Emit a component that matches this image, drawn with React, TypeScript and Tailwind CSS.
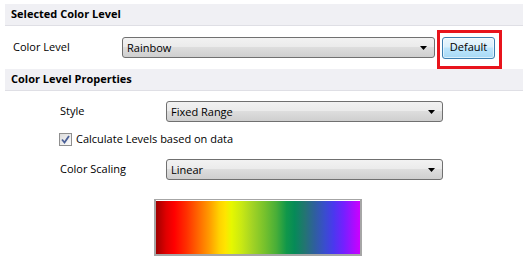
import React from "react";

function Select({ value, className }: { value: string; className: string }) {
  return (
    <div
      className={`relative flex h-[21px] items-center rounded-[3px] border border-[#707070] bg-[linear-gradient(to_bottom,#f2f2f2_0%,#ebebeb_45%,#dddddd_50%,#cfcfcf_100%)] pl-[4px] text-[11px] text-black ${className}`}
    >
      <span className="leading-none">{value}</span>
      <svg className="absolute right-[6px] top-[8px]" width="8" height="5" viewBox="0 0 8 5">
        <path d="M0 0 H7 L3.5 4 Z" fill="#000" />
      </svg>
    </div>
  );
}

function Header({ title }: { title: string }) {
  return (
    <div className="mx-[5px] flex h-[22px] items-center border-b border-[#dfdfe5] bg-[#f0f0f4] pl-[6px] text-[11px] font-bold text-black">
      {title}
    </div>
  );
}

export default function App() {
  return (
    <div className="h-[266px] w-[528px] overflow-hidden bg-white pt-[4px] font-['Open_Sans',sans-serif] text-black">
      <Header title="Selected Color Level" />

      <div className="flex h-[43px] items-center">
        <span className="ml-[13px] w-[109px] text-[11px]">Color Level</span>
        <Select value="Rainbow" className="w-[313px]" />
        <div className="relative ml-[7px]">
          <button className="flex h-[22px] w-[53px] items-center justify-center rounded-[3px] border border-[#3c7fb1] bg-[linear-gradient(to_bottom,#eaf6fd_0%,#d9f0fc_45%,#bee6fd_50%,#a7d9f5_100%)] text-[11px] text-black shadow-[inset_0_0_0_1px_rgba(255,255,255,0.6)]">
            Default
          </button>
          {/* annotation box */}
          <div className="pointer-events-none absolute left-[-5px] top-[-7px] h-[39px] w-[65px] border-[3px] border-[#e8141c]" />
        </div>
      </div>

      <Header title="Color Level Properties" />

      <div className="pl-[60px]">
        <div className="mt-[10px] flex h-[21px] items-center">
          <span className="w-[106px] text-[11px]">Style</span>
          <Select value="Fixed Range" className="w-[277px]" />
        </div>

        <div className="mt-[10px] flex h-[14px] items-center">
          <div className="ml-[-1px] flex h-[13px] w-[13px] items-center justify-center border border-[#8f8f8f] bg-[linear-gradient(135deg,#dcdcdc,#fbfbfb)]">
            <svg width="9" height="9" viewBox="0 0 9 9">
              <path d="M1 4.5 L3.5 7.5 L8 1" fill="none" stroke="#4a5f97" strokeWidth="1.8" />
            </svg>
          </div>
          <span className="ml-[4px] text-[11px]">Calculate Levels based on data</span>
        </div>

        <div className="mt-[13px] flex h-[21px] items-center">
          <span className="w-[106px] text-[11px]">Color Scaling</span>
          <Select value="Linear" className="w-[277px]" />
        </div>

        <div className="ml-[94px] mt-[19px] h-[57px] w-[208px] border-2 border-t-[1px] border-[#a6a6a6] bg-white pt-[1px]">
          <div className="h-full w-full bg-[linear-gradient(to_right,#a00000_0%,#e00000_5%,#ff0000_9%,#ff3000_15%,#ff6000_20%,#ff9a00_26%,#ffd200_31%,#ffe400_34%,#e6f700_37%,#c8e814_42%,#a4d424_47%,#78c22c_53%,#48ae38_59%,#10974a_64%,#068a58_68%,#237472_73%,#2f5ea0_78%,#3a4cd0_83%,#4a38ee_87%,#7420ff_92%,#a010ff_96%,#cc00ff_100%)]" />
        </div>
      </div>
    </div>
  );
}
